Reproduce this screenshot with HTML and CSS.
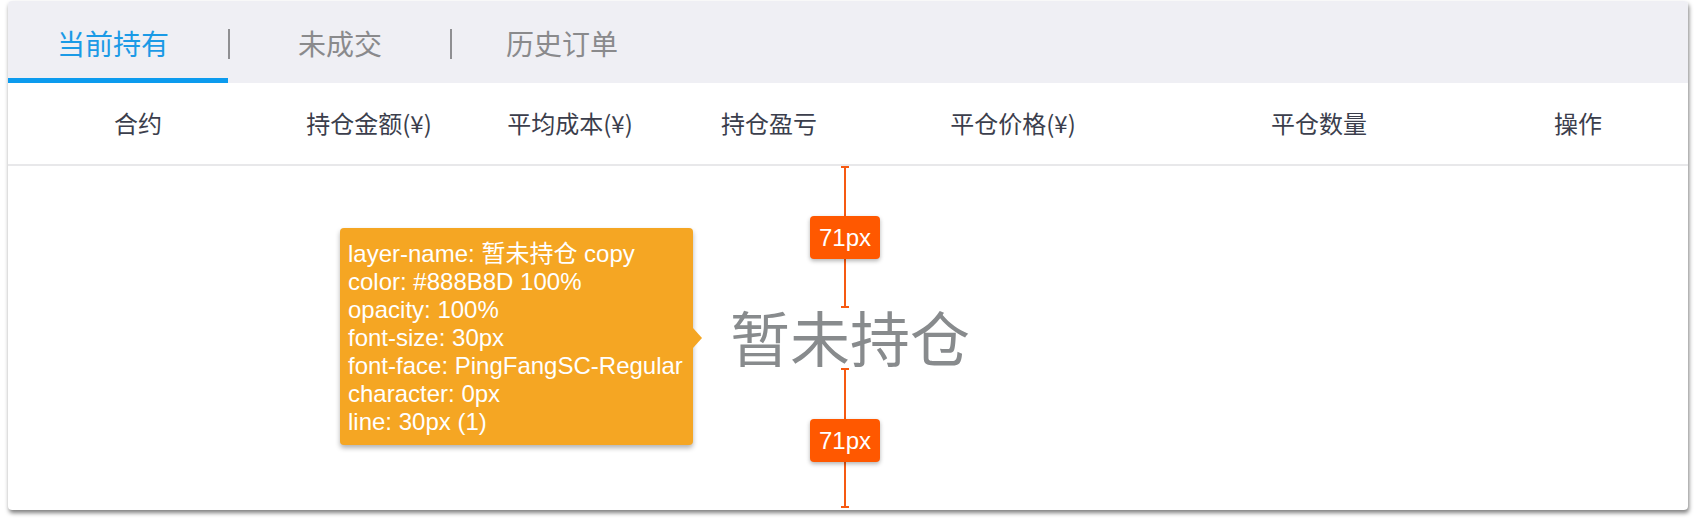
FILE: index.html
```html
<!DOCTYPE html>
<html lang="zh-CN">
<head>
<meta charset="utf-8">
<title>当前持有</title>
<link rel="stylesheet" href="styles.css">
</head>
<body>
<div class="card">
  <div class="tabs">
    <div class="tab tab-first active">当前持有</div>
    <span class="sep"></span>
    <div class="tab">未成交</div>
    <span class="sep"></span>
    <div class="tab">历史订单</div>
  </div>
  <div class="thead">
    <div class="th">合约</div>
    <div class="th">持仓金额(¥)</div>
    <div class="th">平均成本(¥)</div>
    <div class="th">持仓盈亏</div>
    <div class="th">平仓价格(¥)</div>
    <div class="th">平仓数量</div>
    <div class="th">操作</div>
  </div>
  <div class="tbody">
    <div class="empty">暂未持仓</div>
    <div class="measure measure-top"></div>
    <div class="measure measure-bottom"></div>
    <div class="mlabel mlabel-top">71px</div>
    <div class="mlabel mlabel-bottom">71px</div>
    <div class="tooltip">
      <div>layer-name: 暂未持仓 copy</div>
      <div>color: #888B8D 100%</div>
      <div>opacity: 100%</div>
      <div>font-size: 30px</div>
      <div>font-face: PingFangSC-Regular</div>
      <div>character: 0px</div>
      <div>line: 30px (1)</div>
    </div>
  </div>
</div>
</body>
</html>
```

FILE: styles.css
```css
html, body {
  margin: 0;
  padding: 0;
  background: #ffffff;
}

body {
  font-family: "Noto Sans CJK SC", "Noto Sans", sans-serif;
  padding-bottom: 12px;
}

.card {
  margin: 1px 8px 0;
  width: 1680px;
  background: #ffffff;
  border-radius: 4px;
  box-shadow: 1px 3px 4px rgba(0, 0, 0, 0.5);
  overflow: hidden;
}

/* tabs */
.tabs {
  display: flex;
  height: 82px;
  background: #efeff4;
}

.tab {
  box-sizing: border-box;
  width: 220px;
  height: 82px;
  padding-top: 7px;
  border-bottom: 5px solid transparent;
  display: flex;
  align-items: center;
  justify-content: center;
  font-size: 28px;
  line-height: 28px;
  color: #8a8a8c;
}

.tab-first {
  padding-right: 10px;
}

.tab.active {
  color: #1b9ae6;
  border-bottom-color: #0c9bee;
}

.sep {
  width: 2px;
  height: 30px;
  margin-top: 28px;
  background: #8f8f92;
}

/* table head */
.thead {
  display: grid;
  grid-template-columns: 260px 202px 200px 198px 290px 322px 196px;
  height: 81px;
  border-bottom: 2px solid #e8e8ea;
  align-items: center;
}

.th {
  text-align: center;
  font-size: 24px;
  line-height: 24px;
  color: #3b3e4c;
  padding-bottom: 1px;
}

/* body */
.tbody {
  position: relative;
  height: 344px;
  display: flex;
  align-items: center;
  justify-content: center;
}

.empty {
  font-size: 60px;
  line-height: 60px;
  color: #888b8d;
  padding-left: 4px;
  padding-bottom: 5px;
}

.measure {
  position: absolute;
  left: 836px;
  width: 2px;
  background: #f65a12;
}

.measure::before,
.measure::after {
  content: "";
  position: absolute;
  left: -3px;
  width: 8px;
  height: 2px;
  background: #f65a12;
}

.measure::before { top: 0; }
.measure::after { bottom: 0; }

.measure-top {
  top: 0;
  height: 142px;
}

.measure-bottom {
  top: 202px;
  height: 140px;
}

.mlabel {
  position: absolute;
  left: 802px;
  width: 70px;
  height: 43px;
  border-radius: 4px;
  background: #ff5800;
  color: #ffffff;
  font-family: "Liberation Sans", Arial, sans-serif;
  font-size: 24px;
  line-height: 43px;
  text-align: center;
  box-shadow: 0 2px 4px rgba(0, 0, 0, 0.3);
}

.mlabel-top { top: 50px; }
.mlabel-bottom { top: 253px; }

.tooltip {
  position: absolute;
  left: 332px;
  top: 62px;
  box-sizing: border-box;
  width: 353px;
  height: 217px;
  padding: 12px 8px 9px;
  border-radius: 4px;
  background: #f5a623;
  color: #ffffff;
  font-family: "Liberation Sans", Arial, "Noto Sans CJK SC", sans-serif;
  font-size: 24px;
  line-height: 28px;
  white-space: nowrap;
  box-shadow: 0 3px 5px rgba(0, 0, 0, 0.3);
}

.tooltip::after {
  content: "";
  position: absolute;
  right: -9px;
  top: 100px;
  border-left: 9px solid #f5a623;
  border-top: 10px solid transparent;
  border-bottom: 10px solid transparent;
}
```
